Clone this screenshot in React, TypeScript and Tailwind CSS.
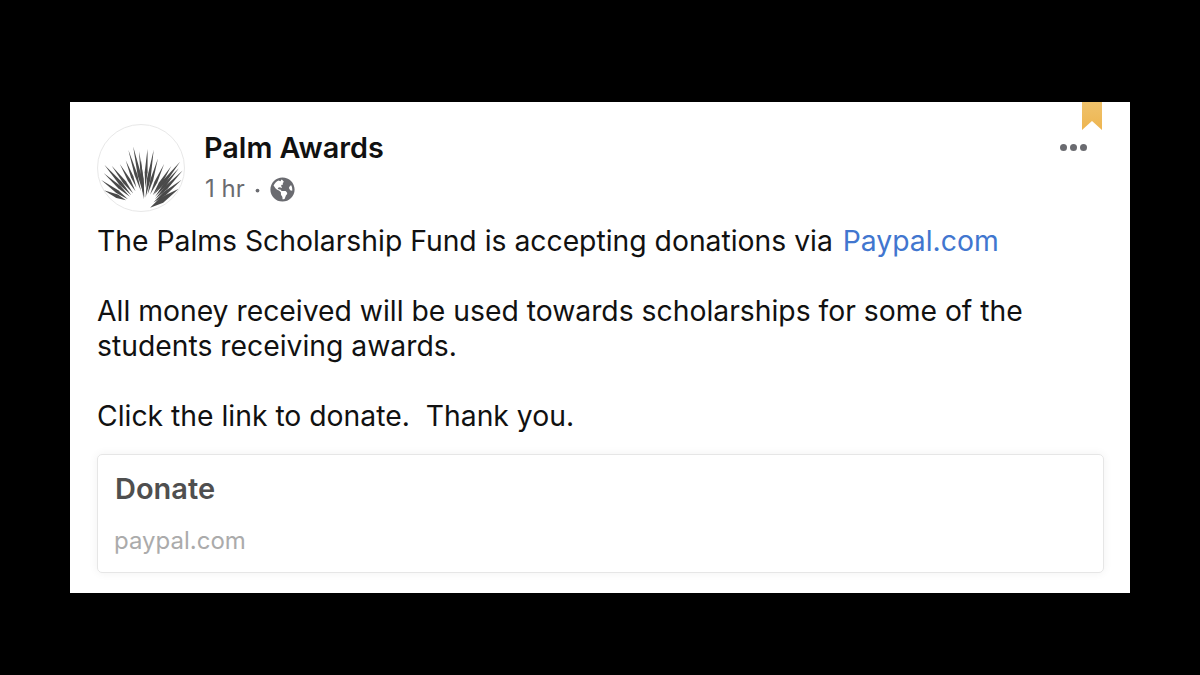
import React from 'react';
import { FaGlobeAmericas } from 'react-icons/fa';

// palm fronds, [tipX, tipY, baseX, baseY, half width]
const FRONDS: number[][] = [
  // centre
  [113, 88, 152, 215, 4.5], [128, 78, 160, 225, 5.5], [146, 92, 162, 235, 4.5],
  [152, 120, 160, 240, 4], [172, 85, 165, 205, 4.5], [191, 88, 166, 235, 5.5],
  [204, 115, 172, 225, 4.5], [105, 120, 138, 205, 4],
  // right
  [223, 132, 180, 225, 4.5], [245, 138, 188, 228, 5], [272, 125, 192, 225, 5.5],
  [268, 145, 195, 232, 5], [280, 152, 195, 240, 5.5], [277, 180, 190, 250, 6],
  [268, 208, 180, 266, 9],
  // left
  [87, 132, 135, 215, 4.5], [62, 137, 128, 222, 5], [40, 135, 122, 228, 5.5],
  [38, 160, 118, 232, 5], [30, 181, 112, 240, 5.5], [38, 212, 106, 243, 6],
];

const frondPoints = ([tx, ty, bx, by, w]: number[]) => {
  const mx = tx + (bx - tx) * 0.6;
  const my = ty + (by - ty) * 0.6;
  const len = Math.hypot(bx - tx, by - ty);
  const nx = ((by - ty) / len) * w;
  const ny = (-(bx - tx) / len) * w;
  return `${tx},${ty} ${mx + nx},${my + ny} ${bx},${by} ${mx - nx},${my - ny}`;
};

const PalmLogo = () => (
  <svg viewBox="20 12 264 264" className="w-full h-full">
    {FRONDS.map((f, i) => (
      <polygon key={i} points={frondPoints(f)} fill="#4a4a4a" />
    ))}
  </svg>
);

export default function App() {
  return (
    <div className="w-[1200px] h-[675px] bg-black px-[70px] pt-[102px] overflow-hidden font-['Inter',sans-serif]">
      <div className="relative h-[491px] bg-white pl-[27px] pr-[26px] pt-[22px]">
        {/* bookmark ribbon */}
        <svg viewBox="0 0 20 28" className="absolute top-0 right-[28px] w-[20px] h-[28px]">
          <defs>
            <linearGradient id="ribbon" x1="0" y1="0" x2="0" y2="1">
              <stop offset="0" stopColor="#efc26b" />
              <stop offset="1" stopColor="#eeb550" />
            </linearGradient>
          </defs>
          <polygon points="0,0 20,0 20,28 10,19 0,28" fill="url(#ribbon)" />
        </svg>

        {/* more menu */}
        <div className="absolute top-[42px] right-[43px] flex gap-[3px]">
          <span className="w-[7px] h-[7px] rounded-full bg-[#6a6b70]" />
          <span className="w-[7px] h-[7px] rounded-full bg-[#6a6b70]" />
          <span className="w-[7px] h-[7px] rounded-full bg-[#6a6b70]" />
        </div>

        {/* header */}
        <div className="flex gap-[20px]">
          <div className="w-[88px] h-[88px] rounded-full border border-[#e8e8e8] overflow-hidden">
            <PalmLogo />
          </div>
          <div className="pt-[6px]">
            <div className="text-[28.8px] leading-[36px] font-semibold text-[#111] -ml-[1px]">Palm Awards</div>
            <div className="flex items-center mt-[8px] text-[24px] leading-[30px] text-[#6a6b70]">
              <span>1 hr</span>
              <span className="ml-[10px] mr-[10px] w-[5px] h-[5px] mt-[2px] rounded-full bg-[#6a6b70] scale-75" />
              <FaGlobeAmericas className="w-[25px] h-[25px]" />
            </div>
          </div>
        </div>

        {/* post body */}
        <div className="mt-[12px] text-[28.3px] leading-[35px] text-[#111] whitespace-pre">
          <p>The Palms Scholarship Fund is accepting donations via <span className="ml-[2px] text-[#4176cf]">Paypal.com</span></p>
          <p className="mt-[35px]">All money received will be used towards scholarships for some of the</p>
          <p>students receiving awards.</p>
          <p className="mt-[35px]">Click the link to donate.  Thank you.</p>
        </div>

        {/* link preview */}
        <div className="mt-[20px] h-[119px] rounded-[5px] border border-[#e6e6e6] shadow-[0_0_10px_rgba(0,0,0,0.06)] px-[17px] pt-[16px]">
          <div className="text-[29px] leading-[36px] font-semibold text-[#4f4f4f]">Donate</div>
          <div className="mt-[19px] text-[24px] leading-[30px] text-[#ababab] -ml-[1px]">paypal.com</div>
        </div>
      </div>
    </div>
  );
}
